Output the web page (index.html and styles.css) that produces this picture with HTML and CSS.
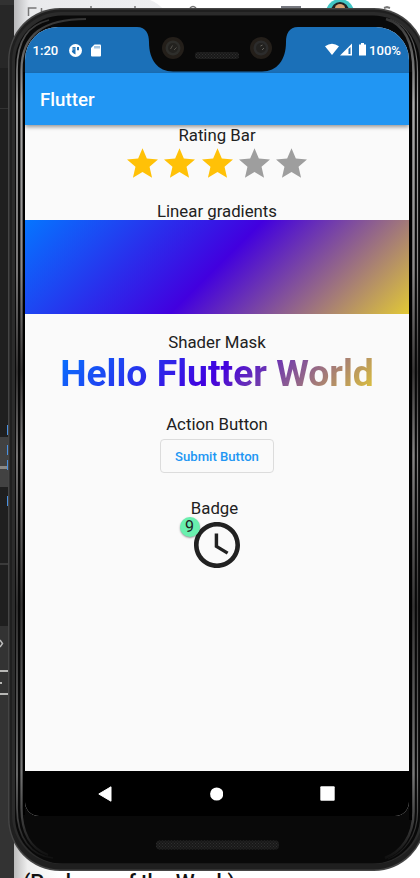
FILE: index.html
```html
<!DOCTYPE html>
<html lang="en">
<head>
<meta charset="utf-8">
<title>Flutter</title>
<link rel="stylesheet" href="styles.css">
</head>
<body>
<svg class="scene" width="420" height="878" viewBox="0 0 420 878">
  <defs>
    <linearGradient id="rim" x1="0" y1="0" x2="0" y2="1">
      <stop offset="0" stop-color="#333"/><stop offset=".1" stop-color="#aaa"/><stop offset=".3" stop-color="#8a8888"/><stop offset=".42" stop-color="#383636"/><stop offset=".52" stop-color="#858383"/><stop offset=".7" stop-color="#353434"/><stop offset=".9" stop-color="#777"/><stop offset="1" stop-color="#111"/>
    </linearGradient>
    <linearGradient id="light" x1="0" y1="0" x2="1" y2="0">
      <stop offset="0" stop-color="#b8b8ba"/><stop offset=".1" stop-color="#e9eaec"/><stop offset="1" stop-color="#eeeff1"/>
    </linearGradient>
    <linearGradient id="shade" x1="0" y1="0" x2="1" y2="0">
      <stop offset="0" stop-color="#bbb"/><stop offset=".3" stop-color="#eee"/><stop offset="1" stop-color="#fff"/>
    </linearGradient>
    <pattern id="mesh" width="3" height="3" patternUnits="userSpaceOnUse"><rect width="3" height="3" fill="#191919"/><path d="M0 0h1v1H0zM1.500 1.500h1v1h-1z" fill="#303030"/></pattern>
  </defs>
  <rect width="420" height="878" fill="#fff"/>
  <rect width="14" height="878" fill="#1f1f1f"/>
  <rect width="14" height="5" fill="#323232"/>
  <rect y="5" width="14" height="63" fill="#272727"/>
  <rect y="108" width="14" height="1" fill="#333"/>
  <rect y="437" width="14" height="50" fill="#424242"/>
  <rect y="466" width="14" height="3" fill="#898886"/>
  <path d="M7 425h1v10H7zM7 445h1v10H7zM7 460h1v10H7zM7 496h1v10H7z" fill="#4a90df"/>
  <rect y="563" width="14" height="2" fill="#3b3b3b"/>
  <rect y="626" width="14" height="252" fill="#333"/>
  <path d="M0 640l2.500 3.500L0 647" fill="none" stroke="#bbb" stroke-width="1.500"/>
  <path d="M0 670h8v2H0zM0 693h8v2H0zM0 682h2v2H0z" fill="#b7b7b5"/>
  <rect x="14" width="150" height="50" fill="url(#light)"/>
  <path d="M150 0q8 3 14 10V0z" fill="#fff"/>
  <path d="M28.500 16V8h8M41.500 16V8M91 6v4M135 6v4M190 8q3-3 6 0" fill="none" stroke="#777" stroke-width="1.500"/>
  <rect x="281" y="6" width="20" height="3" fill="#777980"/>
  <circle cx="340" cy="13" r="14" fill="#42c6c5"/><circle cx="340" cy="11" r="9" fill="#222"/><ellipse cx="340" cy="8" rx="5" ry="4" fill="#d9a273"/>
  <path d="M384 8l3-1 3 1" fill="none" stroke="#777" stroke-width="2"/>
  <rect y="820" x="14" width="45" height="58" fill="url(#shade)"/>
  <text class="behind" x="23" y="890" textLength="212">(Package of the Week)</text>
  <rect x="8" y="8" width="418" height="863" rx="52" ry="53" fill="#454545"/>
  <rect x="9.500" y="9.500" width="415" height="860" rx="51" fill="#1f1f1f"/>
  <rect x="12" y="12" width="411" height="852" rx="49" fill="#2b2b2b"/>
  <rect x="15" y="15.500" width="405" height="848" rx="47" fill="#090909"/>
  <path d="M49 20C29 25 17 39 17 70V808C17 838 31 856 53 858" fill="none" stroke="url(#rim)" stroke-width="1.700"/>
  <path d="M86 19C44 19 21.500 34 21.500 70V808C21.500 834 32 849 48 855" fill="none" stroke="url(#rim)" stroke-width="2.200"/>
  <path d="M386 19C407 25 413.500 48 413.500 72V812C413.500 836 401 852 385 858" fill="none" stroke="url(#rim)" stroke-width="2.500"/>
  <path d="M390 19C411 26 417.500 46 417.500 72V812C417.500 836 404 853 388 859" fill="none" stroke="url(#rim)" stroke-width="1.200"/>
  <path d="M410.500 72V820" stroke="#000" stroke-width="3"/>
  <path d="M24 72V815" stroke="#000" stroke-width="2"/>
  <rect x="156" y="840.500" width="123" height="9" rx="4" fill="url(#mesh)"/>
</svg>
<main class="screen">
  <header class="status">
    <span class="time">1:20</span>
    <svg class="disc" width="13" height="13" viewBox="0 0 13 13"><circle cx="6.500" cy="6.500" r="6.500" fill="#fff"/><path d="M3.500 3h3v7.500C4.600 9.800 3 8.500 2.700 6.800H3.500zM8 3h2v3.300H8z" fill="#1b70b8"/><path d="M3.800 3.800h2v2h-2z" fill="#fff" opacity=".3"/></svg>
    <svg class="sd" width="10" height="13" viewBox="0 0 10 13"><path d="M3.500.5H9q1 0 1 1v10q0 1-1 1H1q-1 0-1-1V4z" fill="#fff"/><path d="M4 2v2.500M6 2v2.500M8 2v2.500" stroke="#1b70b8" stroke-width=".8"/></svg>
    <svg class="signals" width="42" height="14" viewBox="0 0 42 14"><path d="M0 3.300Q7 -1.800 14 3.300L7 12z" fill="#fff"/><path d="M15 12.500L27 .5v12z" fill="#fff"/><path d="M23.500 6l2-2v7h-2z" fill="#1b70b8"/><path d="M36 0h3v1.500h2v11h-7v-11h2z" fill="#fff"/></svg>
    <span>100%</span>
  </header>
  <h1 class="appbar">Flutter</h1>
  <section class="content">
    <p class="label">Rating Bar</p>
    <div class="stars">
      <svg viewBox="2 2 20 19"><path d="M12 17.270L18.180 21l-1.640-7.030L22 9.240l-7.190-.61L12 2 9.190 8.630 2 9.240l5.460 4.730L5.820 21z"/></svg>
      <svg viewBox="2 2 20 19"><path d="M12 17.270L18.180 21l-1.640-7.030L22 9.240l-7.190-.61L12 2 9.190 8.630 2 9.240l5.460 4.730L5.820 21z"/></svg>
      <svg viewBox="2 2 20 19"><path d="M12 17.270L18.180 21l-1.640-7.030L22 9.240l-7.190-.61L12 2 9.190 8.630 2 9.240l5.460 4.730L5.820 21z"/></svg>
      <svg class="off" viewBox="2 2 20 19"><path d="M12 17.270L18.180 21l-1.640-7.030L22 9.240l-7.190-.61L12 2 9.190 8.630 2 9.240l5.460 4.730L5.820 21z"/></svg>
      <svg class="off" viewBox="2 2 20 19"><path d="M12 17.270L18.180 21l-1.640-7.030L22 9.240l-7.190-.61L12 2 9.190 8.630 2 9.240l5.460 4.730L5.820 21z"/></svg>
    </div>
    <p class="label">Linear gradients</p>
    <div class="gradient"></div>
    <p class="label">Shader Mask</p>
    <p class="hello">Hello Flutter World</p>
    <p class="label">Action Button</p>
    <button class="submit">Submit Button</button>
    <p class="label badge-title">Badge</p>
    <div class="clock">
      <svg width="46" height="46" viewBox="2 2 20 20"><path d="M11.990 2C6.470 2 2 6.480 2 12s4.470 10 9.990 10C17.520 22 22 17.520 22 12S17.520 2 11.990 2zM12 20c-4.420 0-8-3.580-8-8s3.580-8 8-8 8 3.580 8 8-3.580 8-8 8zm.5-13H11v6l5.250 3.150.75-1.230-4.500-2.670z" fill="#212121"/></svg>
      <span class="badge">9</span>
    </div>
  </section>
  <nav class="navbar">
    <svg width="14" height="16" viewBox="0 0 14 16"><path d="M13 .8v14.400L.8 8z" fill="#fff" stroke="#fff" stroke-linejoin="round"/></svg>
    <svg width="14" height="14" viewBox="0 0 14 14"><circle cx="7.700" cy="7" r="6.600" fill="#fff"/></svg>
    <svg width="15" height="15" viewBox="0 0 15 15"><rect x=".3" y=".3" width="14.400" height="14.400" rx="1" fill="#fff"/></svg>
  </nav>
</main>
<svg class="notch" width="144" height="46" viewBox="0 0 144 46" aria-hidden="true">
  <path d="M-8 0C1 0 4 7 4 15C4 33 13 44.500 28 44.500H117C132 44.500 141 33 141 15C141 7 144 0 153 0z" fill="#090909"/>
  <circle cx="28" cy="21" r="11" fill="#241f1a"/><circle cx="28" cy="21" r="7.500" fill="#2e2e2b"/><circle cx="28" cy="21" r="5" fill="#23221f"/><path d="M25.500 22l2-3.500M29 23l2.500-2.500" stroke="#55524c"/>
  <circle cx="116" cy="21" r="11" fill="#241f1a"/><circle cx="116" cy="21" r="7.500" fill="#2c2c2c"/><circle cx="116" cy="21" r="5" fill="#22211f"/><path d="M115.500 19l2-1M117 23l2-2" stroke="#66635d"/>
  <rect x="50" y="25" width="44" height="7" rx="3" fill="url(#mesh)"/>
</svg>
</body>
</html>
```
FILE: styles.css
```css
* { box-sizing: border-box; }
body { margin: 0; width: 420px; height: 878px; overflow: hidden; position: relative; font-family: Roboto, sans-serif; color: #212121; }
p, h1 { margin: 0; }
svg { display: block; flex: none; }
.scene { position: absolute; left: 0; top: 0; z-index: -1; }
.behind { font: 500 21.5px Roboto, sans-serif; fill: #111; }
.screen { width: 384px; height: 789px; margin: 27px 0 0 25px; border-radius: 33px 33px 14px 14px; overflow: hidden; display: flex; flex-direction: column; background: #fafafa; }
.status { height: 46px; flex: none; background: #1b70b8; color: #fff; display: flex; align-items: center; padding: 0 8px 0 7.5px; font-size: 13.1px; font-weight: 500; }
.time { width: 36px; }
.disc { margin-right: 9px; }
.signals { margin-left: auto; margin-right: 2px; }
.appbar { height: 52px; flex: none; background: #2196f3; color: #fff; font-size: 18.7px; line-height: 54px; font-weight: 500; padding-left: 15px; box-shadow: 0 2px 4px rgba(0,0,0,.4); position: relative; }
.content { flex: 1; display: flex; flex-direction: column; align-items: center; }
.label { font-size: 16.8px; line-height: 20px; height: 20px; white-space: nowrap; }
.stars { display: flex; gap: 6.3px; margin: 3px 0 22.5px; }
.stars svg { width: 31px; height: 30px; fill: #ffc107; }
.stars .off { fill: #9e9e9e; }
.gradient { width: 100%; height: 93.5px; margin: -.5px 0 18px; flex: none; }
.gradient, .hello { background-image: linear-gradient(135deg, #0575ff, #4200df 50%, #e2c936); }
.hello { font-size: 37.3px; line-height: 44px; font-weight: 700; white-space: nowrap; color: transparent; background-clip: text; -webkit-background-clip: text; margin: -1px 0 19.5px; }
.submit { width: 114px; height: 34px; margin: 5px 0 24.5px; flex: none; border: 1px solid #dcdcdc; border-radius: 4px; background: transparent; color: #2196f3; font: 500 13.1px Roboto, sans-serif; padding: 0; white-space: nowrap; }
.badge-title { margin-right: 5px; }
.clock { position: relative; margin-top: 4px; }
.badge { position: absolute; left: -14px; top: -5px; width: 20px; height: 20px; border-radius: 50%; background: #69f0ae; box-shadow: 0 1px 2px rgba(0,0,0,.4); font-size: 16px; line-height: 20px; text-align: center; text-indent: -1px; }
.navbar { height: 45px; flex: none; background: #000; display: flex; align-items: center; justify-content: space-between; padding: 0 74px 0 73px; }
.notch { position: absolute; left: 145px; top: 27px; overflow: visible; }
```
